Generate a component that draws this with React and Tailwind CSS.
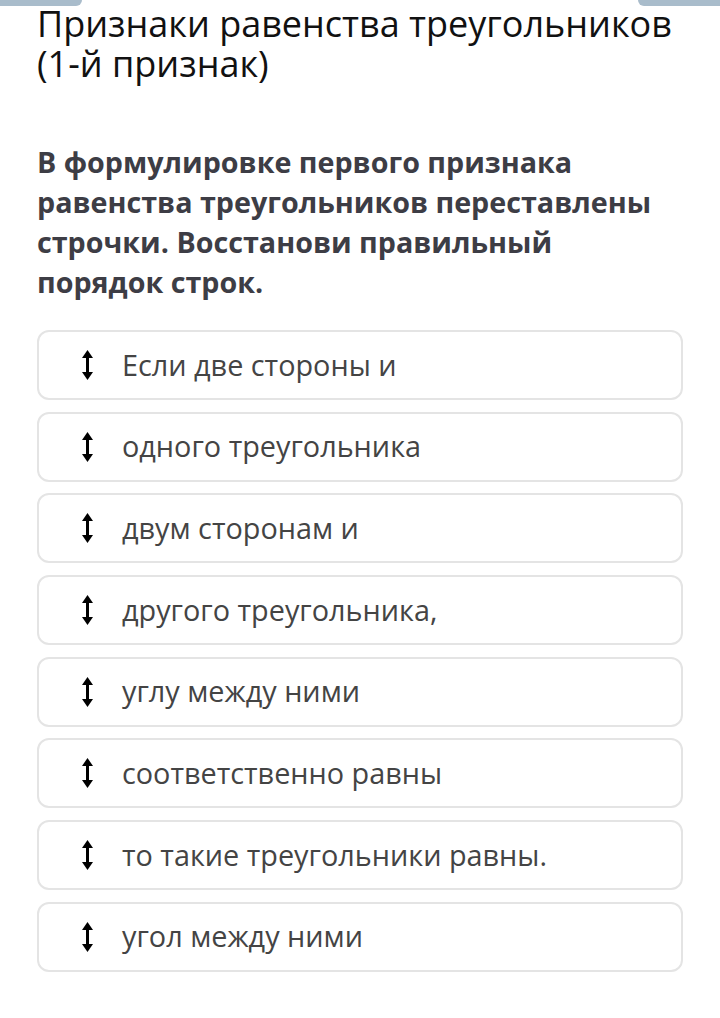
import React from "react";

const items = [
  "Если две стороны и",
  "одного треугольника",
  "двум сторонам и",
  "другого треугольника,",
  "углу между ними",
  "соответственно равны",
  "то такие треугольники равны.",
  "угол между ними",
];

function Arrow() {
  return (
    <svg width="11" height="30" viewBox="0 0 11 30" className="shrink-0">
      <path d="M5.5 0 L11 8 H0 Z" fill="#000" />
      <rect x="4" y="6" width="3" height="18" fill="#000" />
      <path d="M5.5 30 L11 22 H0 Z" fill="#000" />
    </svg>
  );
}

export default function App() {
  return (
    <div
      className="w-[720px] h-[1018px] bg-white overflow-hidden"
      style={{ fontFamily: '"Open Sans", "Noto Sans", sans-serif' }}
    >
      <div className="flex justify-between h-[6px]">
        <div className="w-[82px] h-[6px] bg-[#a9bccb] rounded-br-[6px]" />
        <div className="w-[82px] h-[6px] bg-[#a9bccb] rounded-bl-[6px]" />
      </div>
      <h1 className="-mt-[2px] px-[37px] text-[36px] leading-[40px] text-[#111] font-normal">
        Признаки равенства треугольников (1-й признак)
      </h1>
      <p className="mt-[58px] pl-[37px] pr-[42px] text-[28.7px] leading-[40px] font-bold text-[#3d3d45]">
        В формулировке первого признака равенства треугольников переставлены
        строчки. Восстанови правильный порядок строк.
      </p>
      <div className="mt-[28px] px-[37px] flex flex-col gap-[11.7px]">
        {items.map((t, i) => (
          <div
            key={i}
            className="h-[70px] border-2 border-[#e4e4e4] rounded-[12px] flex items-center pl-[43px]"
          >
            <Arrow />
            <span className="ml-[29px] text-[28.8px] text-[#444] leading-none">{t}</span>
          </div>
        ))}
      </div>
    </div>
  );
}
